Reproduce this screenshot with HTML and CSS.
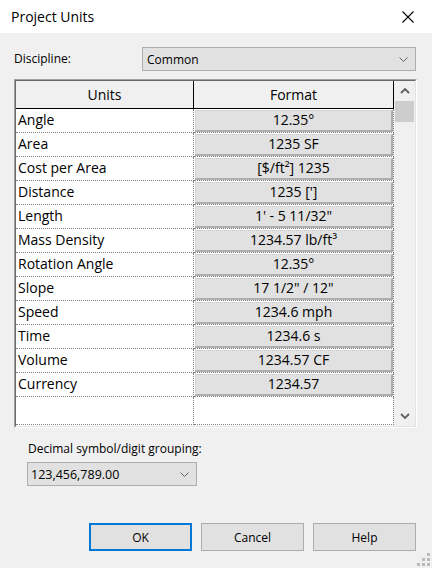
FILE: index.html
```html
<!DOCTYPE html>
<html lang="en">
<head>
    <meta charset="UTF-8">
    <meta name="viewport" content="width=device-width, initial-scale=1.0">
    <title>Project Units</title>
    <link rel="stylesheet" href="styles.css">
</head>
<body>
    <div class="titlebar">
        <span class="title">Project Units</span>
        <svg class="close" width="12" height="12" viewBox="0 0 12 12">
            <path d="M0.5 0.5 L11.5 11.5 M11.5 0.5 L0.5 11.5" stroke="#000" stroke-width="1.1" fill="none"/>
        </svg>
    </div>

    <div class="dialog">
        <div class="field-row">
            <label class="field-label">Discipline:</label>
            <div class="combo combo-wide">
                <span>Common</span>
                <svg class="combo-arrow" width="9" height="5" viewBox="0 0 9 5">
                    <path d="M0.5 0.5 L4.5 4.5 L8.5 0.5" stroke="#606060" stroke-width="1" fill="none"/>
                </svg>
            </div>
        </div>

        <div class="units-box">
            <div class="units-inner">
                <div class="grid">
                    <div class="head-row">
                        <div class="hcell">Units</div>
                        <div class="hcell">Format</div>
                    </div>
                    <div class="row"><div class="name">Angle</div><div class="fmt"><div class="fmt-btn">12.35°</div></div></div>
                    <div class="row"><div class="name">Area</div><div class="fmt"><div class="fmt-btn">1235 SF</div></div></div>
                    <div class="row"><div class="name">Cost per Area</div><div class="fmt"><div class="fmt-btn">[$/ft²] 1235</div></div></div>
                    <div class="row"><div class="name">Distance</div><div class="fmt"><div class="fmt-btn">1235 [']</div></div></div>
                    <div class="row"><div class="name">Length</div><div class="fmt"><div class="fmt-btn">1' - 5 11/32"</div></div></div>
                    <div class="row"><div class="name">Mass Density</div><div class="fmt"><div class="fmt-btn">1234.57 lb/ft³</div></div></div>
                    <div class="row"><div class="name">Rotation Angle</div><div class="fmt"><div class="fmt-btn">12.35°</div></div></div>
                    <div class="row"><div class="name">Slope</div><div class="fmt"><div class="fmt-btn">17 1/2" / 12"</div></div></div>
                    <div class="row"><div class="name">Speed</div><div class="fmt"><div class="fmt-btn">1234.6 mph</div></div></div>
                    <div class="row"><div class="name">Time</div><div class="fmt"><div class="fmt-btn">1234.6 s</div></div></div>
                    <div class="row"><div class="name">Volume</div><div class="fmt"><div class="fmt-btn">1234.57 CF</div></div></div>
                    <div class="row"><div class="name">Currency</div><div class="fmt"><div class="fmt-btn">1234.57</div></div></div>
                    <div class="row filler"><div class="name"></div><div class="fmt"></div></div>
                </div>
                <div class="scrollbar">
                    <div class="arrow">
                        <svg width="10" height="6" viewBox="0 0 10 6"><path d="M1 5 L5 1 L9 5" stroke="#606060" stroke-width="1.8" fill="none"/></svg>
                    </div>
                    <div class="thumb"></div>
                    <div class="track"></div>
                    <div class="arrow">
                        <svg width="10" height="6" viewBox="0 0 10 6"><path d="M1 1 L5 5 L9 1" stroke="#606060" stroke-width="1.8" fill="none"/></svg>
                    </div>
                </div>
            </div>
        </div>

        <div class="grouping">
            <div class="field-label">Decimal symbol/digit grouping:</div>
            <div class="combo combo-small">
                <span>123,456,789.00</span>
                <svg class="combo-arrow" width="9" height="5" viewBox="0 0 9 5">
                    <path d="M0.5 0.5 L4.5 4.5 L8.5 0.5" stroke="#606060" stroke-width="1" fill="none"/>
                </svg>
            </div>
        </div>

        <div class="buttons">
            <button class="btn btn-default">OK</button>
            <button class="btn">Cancel</button>
            <button class="btn">Help</button>
        </div>
    </div>

    <svg class="grip" width="13" height="13" viewBox="0 0 13 13" fill="#bcbcbc">
        <rect x="10" y="0" width="3" height="3"/>
        <rect x="5" y="5" width="3" height="3"/>
        <rect x="10" y="5" width="3" height="3"/>
        <rect x="0" y="10" width="3" height="3"/>
        <rect x="5" y="10" width="3" height="3"/>
        <rect x="10" y="10" width="3" height="3"/>
    </svg>
</body>
</html>
```

FILE: styles.css
```css
body {
    margin: 0;
    width: 432px;
    height: 568px;
    background: #f0f0f0;
    font-family: 'Open Sans', 'Noto Sans', sans-serif;
    font-size: 12px;
    color: #000;
    position: relative;
    overflow: hidden;
}

.titlebar {
    height: 33px;
    background: #fff;
    display: flex;
    align-items: center;
    justify-content: space-between;
    padding: 0 18px 0 11px;
}

.title {
    font-size: 14px;
}

.close {
    margin-top: 1px;
}

.dialog {
    padding: 0 15px 0 14px;
}

.field-row {
    display: flex;
    align-items: center;
    margin-top: 14px;
}

.field-label {
    font-size: 12px;
    line-height: 16px;
}

.field-row .field-label {
    width: 128px;
}

.combo {
    height: 24px;
    box-sizing: border-box;
    border: 1px solid #adadad;
    background: #e1e1e1;
    display: flex;
    align-items: center;
    justify-content: space-between;
    padding: 0 7px 0 4px;
    font-size: 12px;
}

.combo-wide {
    width: 274px;
}

.combo-small {
    width: 170px;
    margin-left: -1px;
    margin-top: 5px;
    padding-left: 3px;
    font-size: 12.5px;
}

.units-box {
    margin-top: 8px;
    width: 403px;
    height: 349px;
    box-sizing: border-box;
    border: 1px solid;
    border-color: #a0a0a0 #fff #fff #a0a0a0;
}

.units-inner {
    height: 100%;
    box-sizing: border-box;
    border: 1px solid;
    border-color: #696969 #e3e3e3 #e3e3e3 #696969;
    display: flex;
    background: #fff;
}

.grid {
    width: 378px;
    font-size: 14px;
}

.head-row {
    display: grid;
    grid-template-columns: 178px 200px;
    height: 28px;
    box-sizing: border-box;
    border-bottom: 1px solid #000;
    background: #f0f0f0;
}

.hcell {
    display: flex;
    align-items: center;
    justify-content: center;
    border-right: 1px solid #000;
}

.row {
    display: grid;
    grid-template-columns: 178px 200px;
    height: 24px;
}

.row.filler {
    height: 28px;
}

.name,
.fmt {
    border-right: 1px dotted #808080;
    border-bottom: 1px dotted #808080;
}

.name {
    padding-left: 2px;
    line-height: 21px;
}

.fmt {
    padding: 1px 0 0 1px;
}

.fmt-btn {
    width: 198px;
    height: 22px;
    box-sizing: border-box;
    background: #e1e1e1;
    border: 1px solid #d4d4d4;
    border-right: 2px solid #adadad;
    border-bottom: 2px solid #adadad;
    text-align: center;
    line-height: 17px;
}

.scrollbar {
    width: 21px;
    background: #f0f0f0;
    display: flex;
    flex-direction: column;
}

.arrow {
    height: 20px;
    display: flex;
    align-items: center;
    justify-content: center;
}

.thumb {
    height: 21px;
    margin: 0 1px;
    background: #cdcdcd;
}

.track {
    flex: 1;
}

.grouping {
    margin-top: 13px;
    padding-left: 14px;
}

.buttons {
    display: flex;
    justify-content: flex-end;
    gap: 9px;
    margin-top: 37px;
    padding-right: 1px;
}

.btn {
    width: 103px;
    height: 28px;
    box-sizing: border-box;
    border: 1px solid #adadad;
    background: #e1e1e1;
    font-family: 'Open Sans', 'Noto Sans', sans-serif;
    font-size: 12px;
    color: #000;
    padding: 0;
}

.btn-default {
    border: 2px solid #0078d7;
}

.grip {
    position: absolute;
    right: 2px;
    bottom: 2px;
}
```
